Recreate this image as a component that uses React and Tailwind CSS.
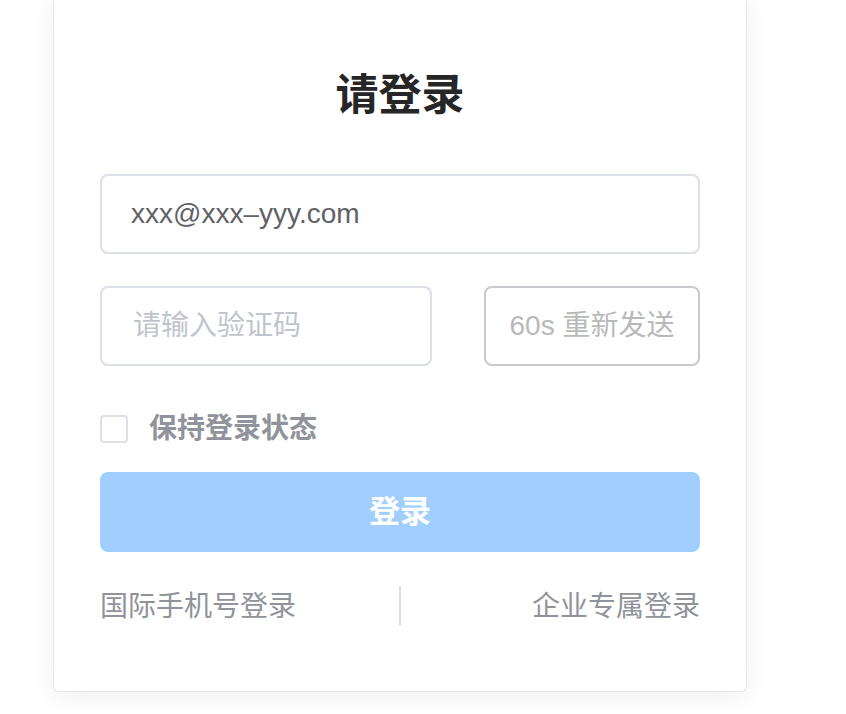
import React, { useState } from 'react';

const font = { fontFamily: '"Liberation Sans", "Noto Sans CJK SC", sans-serif' };

const LoginCard = () => {
  const [keep, setKeep] = useState(false);

  return (
    <div className="w-[694px] ml-[53px] bg-white border border-t-0 border-[#e4e7ed] rounded-b-[6px] shadow-[0_4px_24px_rgba(0,0,0,0.07)] px-[46px] pt-[66px] pb-[64px]">
      <h1 className="text-center text-[43px] leading-[58px] font-bold text-[#262626]">请登录</h1>

      {/* Email */}
      <div className="mt-[50px] h-[80px] rounded-[8px] border-2 border-[#dcdfe6] flex items-center px-[29px]">
        <input
          defaultValue="xxx@xxx–yyy.com"
          className="w-full outline-none bg-transparent text-[28px] text-[#5f6266]"
          style={font}
        />
      </div>

      {/* Code + resend */}
      <div className="mt-[32px] flex items-center justify-between">
        <div className="w-[332px] h-[80px] rounded-[8px] border-2 border-[#dcdfe6] flex items-center px-[31px]">
          <input
            placeholder="请输入验证码"
            className="w-full outline-none bg-transparent text-[28px] text-[#5f6266] placeholder:text-[#c0c4cc]"
            style={font}
          />
        </div>
        <button className="w-[216px] h-[80px] rounded-[8px] border-2 border-[#c8c9cc] text-[28px] text-[#b9b9b9] text-center">
          60s 重新发送
        </button>
      </div>

      {/* Keep login */}
      <label className="mt-[48px] flex items-center gap-[21px] cursor-pointer">
        <span
          onClick={() => setKeep(!keep)}
          className="w-[28px] h-[28px] rounded-[4px] border-2 border-[#dcdfe6] bg-white"
        />
        <span className="text-[28px] leading-[30px] font-bold text-[#909399]">保持登录状态</span>
      </label>

      {/* Submit */}
      <button className="mt-[28px] w-full h-[80px] rounded-[8px] bg-[#a0cfff] text-white text-[31px] font-bold">
        登录
      </button>

      {/* Other logins */}
      <div className="mt-[33px] flex items-center">
        <div className="flex-1 flex justify-start">
          <a className="text-[28px] text-[#909399] leading-[40px] pt-[2px]">国际手机号登录</a>
        </div>
        <span className="w-[2px] h-[40px] bg-[#dcdfe6]" />
        <div className="flex-1 flex justify-end">
          <a className="text-[28px] text-[#909399] leading-[40px] pt-[2px]">企业专属登录</a>
        </div>
      </div>
    </div>
  );
};

export default function App() {
  return (
    <div className="w-[846px] h-[714px] bg-white overflow-hidden" style={font}>
      <LoginCard />
    </div>
  );
}
